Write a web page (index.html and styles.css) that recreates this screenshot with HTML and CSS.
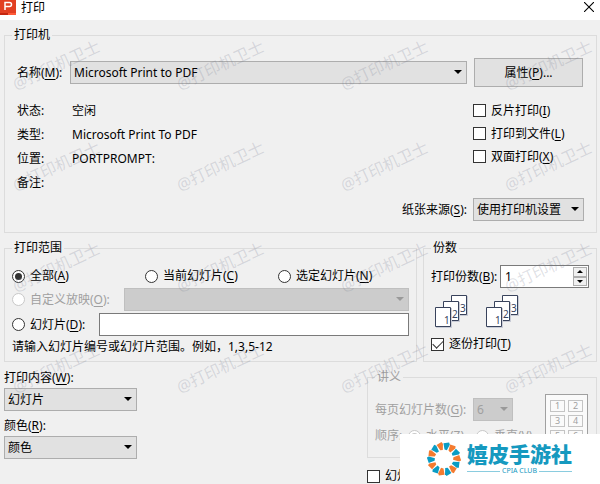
FILE: index.html
```html
<!DOCTYPE html>
<html lang="zh-CN">
<head>
<meta charset="utf-8">
<title>打印</title>
<link rel="stylesheet" href="styles.css">
</head>
<body>
<main class="dialog">
  <header class="titlebar">
    <svg class="app-icon" viewBox="0 0 16 15" aria-hidden="true">
      <rect width="16" height="15" fill="#e23f22"/>
      <path d="M0 13h8v2H0z" fill="#c5260f"/>
      <path d="M8 13h8v2H8z" fill="#ff5a38"/>
      <path d="M5 10V2.500h4.500q2 0 2 2t-2 2H5" fill="none" stroke="#fff" stroke-width="1.500"/>
    </svg>
    <h1 class="title">打印</h1>
    <button class="close" type="button" aria-label="关闭">
      <svg viewBox="0 0 10 10" aria-hidden="true"><path d="M0 0l10 10M10 0L0 10" stroke="#000" stroke-width="1.100"/></svg>
    </button>
  </header>

  <form class="content">
    <fieldset class="group printer">
      <legend>打印机</legend>
      <div class="printer-grid">
        <div class="name-row">
          <label for="printer">名称(<u>M</u>):</label>
          <span class="select grow"><select id="printer"><option>Microsoft Print to PDF</option></select></span>
        </div>
        <button class="button" type="button">属性(<u>P</u>)...</button>
        <dl class="details">
          <dt>状态:</dt><dd>空闲</dd>
          <dt>类型:</dt><dd>Microsoft Print To PDF</dd>
          <dt>位置:</dt><dd>PORTPROMPT:</dd>
          <dt>备注:</dt><dd></dd>
        </dl>
        <div class="checks">
          <label class="option"><input type="checkbox"><span>反片打印(<u>I</u>)</span></label>
          <label class="option"><input type="checkbox"><span>打印到文件(<u>L</u>)</span></label>
          <label class="option"><input type="checkbox"><span>双面打印(<u>X</u>)</span></label>
        </div>
        <label class="source-label" for="source">纸张来源(<u>S</u>):</label>
        <span class="select"><select id="source"><option>使用打印机设置</option></select></span>
      </div>
    </fieldset>

    <div class="middle">
      <fieldset class="group range">
        <legend>打印范围</legend>
        <div class="range-options">
          <label class="option"><input type="radio" name="range" checked><span>全部(<u>A</u>)</span></label>
          <label class="option"><input type="radio" name="range"><span>当前幻灯片(<u>C</u>)</span></label>
          <label class="option"><input type="radio" name="range"><span>选定幻灯片(<u>N</u>)</span></label>
        </div>
        <div class="custom-row">
          <label class="option disabled"><input type="radio" name="range" disabled><span>自定义放映(<u>O</u>):</span></label>
          <span class="select off"><select aria-label="自定义放映" disabled><option></option></select></span>
        </div>
        <div class="slides-row">
          <label class="option"><input type="radio" name="range"><span>幻灯片(<u>D</u>):</span></label>
          <input class="field" type="text" aria-label="幻灯片">
        </div>
        <p class="hint">请输入幻灯片编号或幻灯片范围。例如，1,3,5-12</p>
      </fieldset>

      <fieldset class="group copies">
        <legend>份数</legend>
        <div class="copies-row">
          <label for="copies">打印份数(<u>B</u>):</label>
          <span class="spinner">
            <input id="copies" type="text" value="1">
            <span class="steps">
              <button class="step up" type="button" aria-label="增加"></button>
              <button class="step down" type="button" aria-label="减少"></button>
            </span>
          </span>
        </div>
        <div class="stacks">
          <svg class="stack" viewBox="0 0 33 33" role="img" aria-label="1 2 3">
            <g class="sheet"><path class="shadow" d="M17 1h16v20H17z"/><path d="M16.500.5h15v19h-15z"/><text x="25" y="17">3</text></g>
            <g class="sheet"><path class="shadow" d="M9 7h16v20H9z"/><path d="M8.500 6.500h15v19h-15z"/><text x="17" y="23">2</text></g>
            <g class="sheet"><path class="shadow" d="M1 13h16v20H1z"/><path d="M.5 12.500h15v19H.5z"/><text x="9" y="29">1</text></g>
          </svg>
          <svg class="stack" viewBox="0 0 33 33" role="img" aria-label="1 2 3">
            <g class="sheet"><path class="shadow" d="M17 1h16v20H17z"/><path d="M16.500.5h15v19h-15z"/><text x="25" y="17">3</text></g>
            <g class="sheet"><path class="shadow" d="M9 7h16v20H9z"/><path d="M8.500 6.500h15v19h-15z"/><text x="17" y="23">2</text></g>
            <g class="sheet"><path class="shadow" d="M1 13h16v20H1z"/><path d="M.5 12.500h15v19H.5z"/><text x="9" y="29">1</text></g>
          </svg>
        </div>
        <label class="option"><input type="checkbox" checked><span>逐份打印(<u>T</u>)</span></label>
      </fieldset>
    </div>

    <div class="bottom">
      <div class="output">
        <label for="what">打印内容(<u>W</u>):</label>
        <span class="select"><select id="what"><option>幻灯片</option></select></span>
        <label for="color">颜色(<u>R</u>):</label>
        <span class="select"><select id="color"><option>颜色</option></select></span>
      </div>
      <div class="side">
        <fieldset class="group handout" disabled>
          <legend>讲义</legend>
          <div class="handout-body">
            <div class="handout-controls">
              <div class="per-page">
                <label for="per-page">每页幻灯片数(<u>G</u>):</label>
                <span class="select off"><select id="per-page"><option>6</option></select></span>
              </div>
              <div class="order">
                <span>顺序:</span>
                <label class="option"><input type="radio" name="order" checked><span>水平(<u>Z</u>)</span></label>
                <label class="option"><input type="radio" name="order"><span>垂直(<u>V</u>)</span></label>
              </div>
            </div>
            <div class="preview"><span>1</span><span>2</span><span>3</span><span>4</span><span>5</span><span>6</span></div>
          </div>
        </fieldset>
        <label class="option"><input type="checkbox"><span>幻灯片加框(<u>F</u>)</span></label>
      </div>
    </div>
  </form>

  <div class="watermarks" aria-hidden="true">
    <span>@打印机卫士</span><span>@打印机卫士</span><span>@打印机卫士</span><span>@打印机卫士</span>
    <span>@打印机卫士</span><span>@打印机卫士</span><span>@打印机卫士</span><span>@打印机卫士</span>
    <span>@打印机卫士</span><span>@打印机卫士</span><span>@打印机卫士</span><span>@打印机卫士</span>
    <span>@打印机卫士</span><span>@打印机卫士</span><span>@打印机卫士</span><span>@打印机卫士</span>
  </div>

  <aside class="brand">
    <svg class="brand-ring" viewBox="-17 -17 34 34" aria-hidden="true">
      <defs><path id="blade" d="M-3-15.500L2.500-17 3.500-15 1.500-9-1-9.500z"/></defs>
      <g fill="#f47b30">
        <use href="#blade" transform="rotate(-17)"/><use href="#blade" transform="rotate(34)"/><use href="#blade" transform="rotate(86)"/><use href="#blade" transform="rotate(137)"/><use href="#blade" transform="rotate(189)"/><use href="#blade" transform="rotate(240)"/><use href="#blade" transform="rotate(291)"/>
      </g>
      <g fill="#0a9cc4">
        <use href="#blade" transform="rotate(9)"/><use href="#blade" transform="rotate(60)"/><use href="#blade" transform="rotate(112)"/><use href="#blade" transform="rotate(163)"/><use href="#blade" transform="rotate(214)"/><use href="#blade" transform="rotate(266)"/><use href="#blade" transform="rotate(317)"/>
      </g>
    </svg>
    <div class="brand-text">
      <strong>嬉皮手游社</strong>
      <span class="brand-sub">CPIA CLUB</span>
    </div>
  </aside>
</main>
</body>
</html>
```
FILE: styles.css
```css
* { box-sizing: border-box; }

body {
  margin: 0;
  background: #f0f0f0;
  color: #000;
  font: 12px/16px "Noto Sans", "Noto Sans CJK SC", sans-serif;
}

button, input, select { font: inherit; color: inherit; margin: 0; }
u { text-underline-offset: 2px; }

.dialog {
  position: relative;
  min-height: 100vh;
  overflow: hidden;
}

.titlebar {
  display: flex;
  align-items: flex-start;
  height: 20px;
  background: #fff;
}
.app-icon { width: 16px; height: 15px; }
.title { flex: 1; margin: 0 0 0 5px; font-size: 12px; font-weight: 400; line-height: 15px; }
.close { padding: 2px 6px 0 0; border: 0; background: none; line-height: 0; }
.close svg { width: 10px; height: 10px; }

.content { padding: 7px 3px 0 4px; }

.group {
  min-width: 0;
  margin: 0;
  padding: 0 7px;
  border: 1px solid #dcdcdc;
}
legend { padding: 0 2px; }

.option { display: flex; align-items: center; gap: 5px; white-space: nowrap; }
.option input {
  appearance: none;
  flex: none;
  display: grid;
  place-items: center;
  width: 13px;
  height: 13px;
  border: 1px solid #333;
  background: #fff;
}
.option input[type="radio"] { border-radius: 50%; }
.option input[type="radio"]:checked::before {
  content: "";
  width: 7px;
  height: 7px;
  border-radius: 50%;
  background: #333;
}
.option input[type="checkbox"]:checked::before {
  content: "";
  width: 9px;
  height: 5px;
  border: solid #333;
  border-width: 0 0 1px 1px;
  transform: translateY(-1px) rotate(-45deg);
}
.disabled, .handout { color: #a0a0a0; }
.option input:disabled { border-color: #c8c8c8; }
.option input:disabled:checked::before { background: #c8c8c8; }

.select { position: relative; display: flex; height: 23px; }
.select select {
  appearance: none;
  width: 100%;
  padding: 0 3px;
  border: 1px solid #adadad;
  border-radius: 0;
  background: #e1e1e1;
  opacity: 1;
}
.select::after {
  content: "";
  position: absolute;
  top: 9px;
  right: 5px;
  border: 4px solid transparent;
  border-top-color: #000;
  border-bottom: 0;
}
.off select { background: #ccc; border-color: #bfbfbf; color: #a0a0a0; }
.off::after { border-top-color: #999; }
.grow { flex: 1; }

.button { height: 29px; margin: 0 1px; padding: 0; border: 1px solid #adadad; background: #e1e1e1; }

.printer-grid {
  display: grid;
  grid-template-columns: 1fr 111px;
  column-gap: 6px;
  padding: 15px 5px 11px;
}
.name-row { display: flex; align-items: center; }
.name-row label { width: 53px; white-space: nowrap; }
.details {
  display: grid;
  grid-template-columns: 55px 1fr;
  grid-auto-rows: 24px;
  align-items: center;
  margin: 12px 0 3px;
}
.details dd { margin: 0; }
.checks { display: grid; grid-auto-rows: 23px; align-items: center; margin-top: 12px; align-content: start; }
.source-label { align-self: center; justify-self: end; }

.middle {
  display: grid;
  grid-template-columns: 1fr 174px;
  gap: 6px;
  margin-top: 7px;
}
.range-options {
  display: grid;
  grid-template-columns: 133px 133px 1fr;
  height: 24px;
  margin-top: 8px;
}
.custom-row, .slides-row { display: grid; grid-template-columns: 112px 1fr; height: 23px; }
.slides-row { grid-template-columns: 87px 1fr; margin-top: 2px; }
.field { min-width: 0; border: 1px solid #7a7a7a; background: #fff; padding: 0 4px; }
.hint { margin: 2px 0 6px; line-height: 17px; }

.copies-row { display: grid; grid-template-columns: 69px minmax(0, 1fr); align-items: center; margin-top: 9px; white-space: nowrap; }
.spinner { display: flex; height: 23px; padding: 1px; border: 1px solid #7a7a7a; background: #fff; }
.spinner input { flex: 1; min-width: 0; padding: 0 3px; border: 0; background: none; }
.steps { display: grid; flex: none; width: 14px; grid-template-rows: 1fr 1fr; }
.step { display: grid; place-items: center; padding: 0; border: 1px solid #adadad; background: #f0f0f0; }
.step::before { content: ""; border: 3px solid transparent; }
.up::before { border-bottom-color: #000; border-top: 0; }
.down::before { border-top-color: #000; border-bottom: 0; }
.stacks { display: flex; gap: 18px; margin: 7px 4px 8px; }
.stack { width: 33px; height: 33px; }
.sheet path { fill: #fff; stroke: #39435c; }
.sheet .shadow { fill: #c9ccd6; stroke: none; }
.sheet text { font-size: 10px; fill: #39435c; }

.bottom { display: grid; grid-template-columns: 133px 230px; justify-content: space-between; margin-top: 7px; }
.output { display: grid; grid-template-rows: 19px 23px 25px 23px; align-items: end; align-content: start; }
.output label { padding-bottom: 2px; }
.handout-body { display: flex; justify-content: space-between; height: 72px; padding: 9px 1px 0 0; }
.per-page { display: flex; align-items: center; justify-content: space-between; width: 138px; height: 23px; margin-top: 4px; white-space: nowrap; }
.per-page .select { width: 40px; }
.order { display: grid; grid-template-columns: 33px 68px auto; height: 30px; align-items: center; }
.preview {
  display: grid;
  grid-template-columns: 15px 15px;
  grid-auto-rows: 12px;
  gap: 3px;
  width: 43px;
  height: 56px;
  padding: 5px 4px;
  border: 1px solid #a0a0a0;
  background: #fafafa;
}
.preview span { border: 1px solid #c4c4c4; font-size: 9px; line-height: 10px; text-align: center; }
.side > .option { margin-top: 10px; }

.watermarks {
  position: absolute;
  top: 14px;
  left: -26px;
  display: grid;
  grid-template-columns: repeat(4, 164px);
  grid-auto-rows: 101px;
  place-items: center;
  color: rgba(120, 125, 145, 0.23);
  font-size: 16px;
  white-space: nowrap;
  pointer-events: none;
}
.watermarks span { transform: rotate(-25deg); }

.brand {
  position: absolute;
  right: 0;
  bottom: 0;
  display: flex;
  gap: 6px;
  width: 200px;
  height: 50px;
  padding: 8px 0 0 27px;
  background: #fff;
  color: #1599bf;
}
.brand-ring { width: 34px; height: 34px; }
.brand-text { width: 105px; }
.brand-text strong { display: block; font-size: 21px; line-height: 24px; font-weight: 900; white-space: nowrap; }
.brand-sub { display: flex; align-items: center; gap: 2px; font-size: 7px; line-height: 10px; white-space: nowrap; }
.brand-sub::before, .brand-sub::after { content: ""; flex: 1; height: 1px; background: #8accdf; }
```
